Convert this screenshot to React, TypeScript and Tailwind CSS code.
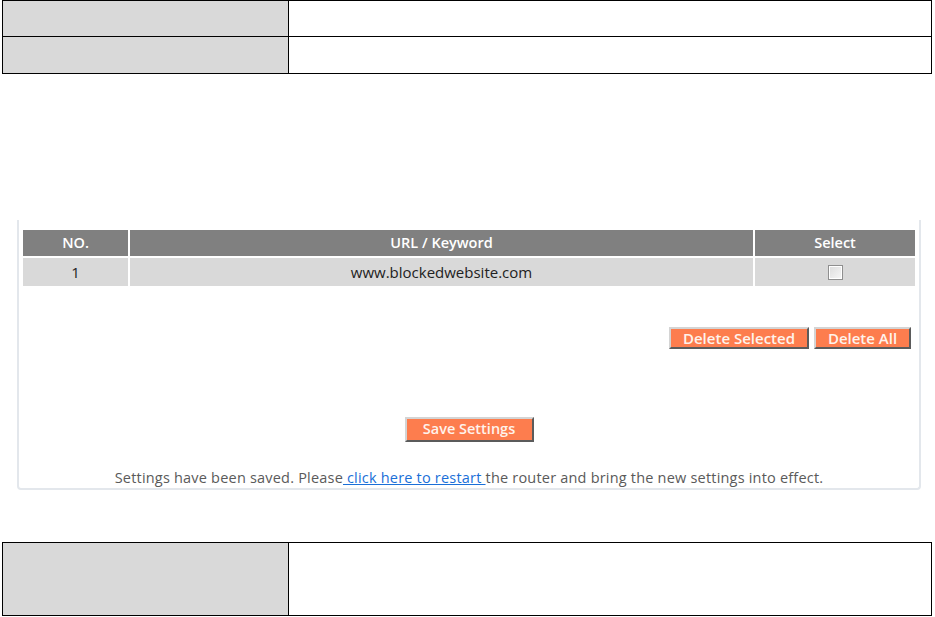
export default function App() {
  return (
    <div className="w-[935px] h-[617px] bg-white overflow-hidden font-['Open_Sans','Lato',sans-serif] text-[#333]">
      {/* top blank form table */}
      <div className="ml-[2px] w-[930px] border-[1.5px] border-black grid grid-cols-[286px_1fr]">
        <div className="h-[36px] bg-[#d9d9d9] border-r border-b border-black" />
        <div className="h-[36px] border-b border-black" />
        <div className="h-[36px] bg-[#d9d9d9] border-r border-black" />
        <div className="h-[36px]" />
      </div>

      {/* settings panel */}
      <div className="mt-[146px] ml-[17px] w-[904px] h-[270px] border-l-2 border-r-2 border-b-2 border-[#e3e7ec] rounded-b-[4px] px-[4px] pt-[10px] flex flex-col">
        <div className="w-[892px]">
          <div className="grid grid-cols-[107px_625px_160px] h-[26px] bg-[#808080] text-white font-semibold text-[14.5px]">
            <div className="flex items-center justify-center border-r-2 border-white">NO.</div>
            <div className="flex items-center justify-center border-r-2 border-white">URL / Keyword</div>
            <div className="flex items-center justify-center">Select</div>
          </div>
          <div className="grid grid-cols-[107px_625px_160px] h-[30px] bg-[#d9d9d9] border-t-2 border-white text-[#222] text-[15px]">
            <div className="flex items-center justify-center border-r-2 border-white">1</div>
            <div className="flex items-center justify-center border-r-2 border-white">www.blockedwebsite.com</div>
            <div className="flex items-center justify-center">
              <span className="w-[15px] h-[15px] border border-[#8f8f8f] bg-gradient-to-br from-[#dcdcdc] to-[#f7f7f7] shadow-[inset_0_0_0_1px_#fff]" />
            </div>
          </div>
        </div>

        <div className="mt-[41px] flex justify-end gap-[5px] pr-[4px]">
          <button className="h-[22px] w-[140px] bg-[#fd7d4e] text-[#fff3ec] font-semibold text-[15px] border-2 border-t-[#d4d4d4] border-l-[#d4d4d4] border-r-[#5b5b5b] border-b-[#5b5b5b] leading-none">
            Delete Selected
          </button>
          <button className="h-[22px] w-[97px] bg-[#fd7d4e] text-[#fff3ec] font-semibold text-[15px] border-2 border-t-[#d4d4d4] border-l-[#d4d4d4] border-r-[#5b5b5b] border-b-[#5b5b5b] leading-none">
            Delete All
          </button>
        </div>

        <div className="mt-[68px] flex justify-center">
          <button className="h-[25px] w-[129px] bg-[#fd7d4e] text-[#fff3ec] font-semibold text-[14.5px] border-2 border-t-[#d4d4d4] border-l-[#d4d4d4] border-r-[#5b5b5b] border-b-[#5b5b5b] leading-none">
            Save Settings
          </button>
        </div>

        <p className="mt-[25px] text-center text-[14.5px] tracking-[0.2px] text-[#5a5a5a] whitespace-nowrap">
          Settings have been saved. Please
          <a href="#" className="text-[#1a6fd8] underline"> click here to restart </a>
          the router and bring the new settings into effect.
        </p>
      </div>

      {/* bottom blank form table */}
      <div className="mt-[52px] ml-[2px] w-[930px] h-[74px] border-[1.5px] border-black grid grid-cols-[286px_1fr]">
        <div className="bg-[#d9d9d9] border-r border-black" />
        <div />
      </div>
    </div>
  );
}
